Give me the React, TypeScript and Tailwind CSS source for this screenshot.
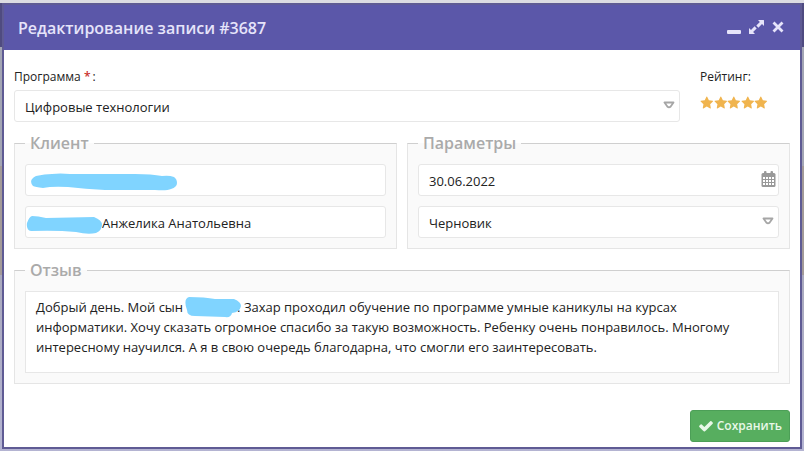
import { useState } from "react";
import type { ReactNode } from "react";

const FIELD =
  "block h-8 w-full rounded-[3px] border border-[#e7e7e7] bg-white px-[10px] text-[13px] text-[#222] outline-none";

const REVIEW =
  "Добрый день. Мой сын" +
  "\u00a0".repeat(16) +
  ". Захар проходил обучение по программе умные каникулы на курсах информатики. Хочу сказать огромное спасибо за такую возможность. Ребенку очень понравилось. Многому интересному научился. А я в свою очередь благодарна, что смогли его заинтересовать.";

function Star() {
  return (
    <svg viewBox="0 0 1792 1792" className="h-[14px] w-[14px]" fill="#f0b44e" aria-hidden="true">
      <path d="M1728 647q0 22-26 48l-363 354 86 500q1 7 1 20 0 21-10.5 35.5t-30.5 14.5q-19 0-40-12l-449-236-449 236q-22 12-40 12-21 0-31.5-14.5t-10.5-35.5q0-6 2-20l86-500-364-354q-25-27-25-48 0-37 56-46l502-73 225-455q19-41 49-41t49 41l225 455 502 73q56 9 56 46z" />
    </svg>
  );
}

function SelectArrow() {
  return (
    <svg viewBox="0 0 12 8" className="pointer-events-none absolute top-[11px] right-[5px] h-2 w-3" aria-hidden="true">
      <path d="M1.5 1.5H10.5L7.5 5.8Q6 7 4.5 5.8Z" fill="#fff" stroke="#a6a6a6" strokeWidth="1.8" strokeLinejoin="round" />
    </svg>
  );
}

function CalendarIcon() {
  return (
    <svg viewBox="0 0 15 16" className="h-4 w-[15px]" aria-hidden="true">
      <rect x="0.500" y="2" width="14" height="14" rx="1.500" fill="#999" />
      <rect x="3" y="0" width="2.500" height="4" rx="1" fill="#999" />
      <rect x="9.500" y="0" width="2.500" height="4" rx="1" fill="#999" />
      <path
        fill="#fff"
        d="M2 6h2v2H2zM5 6h2v2H5zM8 6h2v2H8zM11 6h2v2H11zM2 9h2v2H2zM5 9h2v2H5zM8 9h2v2H8zM11 9h2v2H11zM2 12h2v2H2zM5 12h2v2H5zM8 12h2v2H8zM11 12h2v2H11z"
      />
    </svg>
  );
}

function Group({ title, children }: { title: string; children: ReactNode }) {
  return (
    <fieldset className="min-w-0 border border-[#e5e5e5] border-t-[#cfcfcf] bg-[#fafafa] px-[10px] pb-[10px]">
      <legend className="px-[5px] text-base leading-5 font-semibold text-[#aaa]">{title}</legend>
      <div className="flex flex-col gap-[10px] pt-[11px]">{children}</div>
    </fieldset>
  );
}

export default function App() {
  const [name, setName] = useState("Анжелика Анатольевна");
  const [login, setLogin] = useState("");
  const [date, setDate] = useState("30.06.2022");
  const [review, setReview] = useState(REVIEW);

  return (
    <div className="min-h-screen bg-[linear-gradient(to_bottom,#dcdce2_3px,#4f4b80_3px,#4f4b80_47px,#a3a5b4_47px,#a3a5b4_166px,#a39a98_166px,#a39a98_275px,#a9a9bd_275px,#b4b4d2)] px-[2px] pt-[3px] pb-[2px] font-['Open_Sans','Noto_Sans',sans-serif] text-[#222]">
      <div role="dialog" aria-labelledby="dialog-title" className="flex min-h-[calc(100vh-5px)] flex-col border-2 border-[#5f5b94] bg-white">
        <header className="flex h-[45px] items-center justify-between bg-[#5b57a9] pr-4 pl-[14px] text-[#e6e4fa]">
          <h1 id="dialog-title" className="text-base font-semibold">Редактирование записи #3687</h1>
          <div className="flex items-center gap-2">
            <button type="button" aria-label="Свернуть" className="block">
              <svg viewBox="0 0 14 16" className="h-4 w-[14px]" fill="currentColor">
                <rect y="10" width="14" height="4" rx="1" />
              </svg>
            </button>
            <button type="button" aria-label="Развернуть" className="block">
              <svg viewBox="0 0 15 16" className="h-4 w-[15px]" fill="currentColor">
                <path d="M9 0H14.500Q15 0 15 .500V6L13 4.100L9.400 7.700L7.300 5.600L10.900 2zM6 14H.500Q0 14 0 13.500V8L2 9.900L5.600 6.300L7.700 8.400L4.100 12z" />
              </svg>
            </button>
            <button type="button" aria-label="Закрыть" className="block">
              <svg viewBox="0 0 12 16" className="h-4 w-3" stroke="currentColor" strokeWidth="2.8">
                <path d="M1.500 2.500l9 9M10.500 2.500l-9 9" />
              </svg>
            </button>
          </div>
        </header>

        <form className="flex grow flex-col px-[10px] pb-[5px]" onSubmit={(e) => e.preventDefault()}>
          <div className="flex gap-5 pt-[17px]">
            <div className="grow">
              <label htmlFor="program" className="block h-[23px] text-xs leading-5">
                Программа <span className="pr-[2px] font-semibold text-[#c9302c]">*</span>:
              </label>
              <div className="relative">
                <select id="program" className={FIELD + " appearance-none pt-[3px]"}>
                  <option>Цифровые технологии</option>
                </select>
                <SelectArrow />
              </div>
            </div>
            <div className="w-[90px]">
              <div className="h-[23px] text-xs leading-5">Рейтинг:</div>
              <div role="img" aria-label="5 из 5" className="flex w-[68px] pt-[6px]">
                <Star />
                <Star />
                <Star />
                <Star />
                <Star />
              </div>
            </div>
          </div>

          <div className="mt-[11px] grid grid-cols-2 gap-[10px]">
            <Group title="Клиент">
              <div className="relative">
                <input aria-label="Логин" className={FIELD + " pt-[1px]"} value={login} onChange={(e) => setLogin(e.target.value)} />
                <svg viewBox="0 0 148 18" className="absolute top-[9px] left-[5px] h-[18px] w-[148px]" fill="#80d4ff" aria-hidden="true">
                  <path d="M6 3Q15 1 22 1Q30 0 40 1L105 1Q122 1 132 3Q139 2 144 4Q147 6 147 10Q147 14 141 16Q137 18 125 17L75 17Q55 16 38 14Q22 13 13 15Q5 14 3 13Q-2 7 6 3Z" />
                </svg>
              </div>
              <div className="relative">
                <input aria-label="Имя клиента" className={FIELD + " pt-[1px] pl-[76px]"} value={name} onChange={(e) => setName(e.target.value)} />
                <svg viewBox="0 0 76 18" className="absolute top-[10px] left-[1px] h-[18px] w-[76px]" fill="#80d4ff" aria-hidden="true">
                  <path d="M6 0Q12 0 20 2L68 1Q76 4 76 9Q76 14 70 17Q62 19 50 16Q30 14 5 15Q0 14 1 7Q3 1 6 0Z" />
                </svg>
              </div>
            </Group>
            <Group title="Параметры">
              <div className="relative">
                <input aria-label="Дата" className={FIELD + " pt-[1px]"} value={date} onChange={(e) => setDate(e.target.value)} />
                <button type="button" aria-label="Выбрать дату" className="absolute top-[7px] right-[3px] block">
                  <CalendarIcon />
                </button>
              </div>
              <div className="relative">
                <select aria-label="Статус" className={FIELD + " appearance-none pt-[3px]"}>
                  <option>Черновик</option>
                </select>
                <SelectArrow />
              </div>
            </Group>
          </div>

          <div className="mt-[11px]">
            <Group title="Отзыв">
              <div className="relative">
                <textarea
                  aria-label="Отзыв"
                  className="block h-[82px] w-full resize-none overflow-hidden border border-[#e7e7e7] bg-white px-[10px] py-[5px] text-[13px] leading-5 outline-none"
                  value={review}
                  onChange={(e) => setReview(e.target.value)}
                />
                <svg viewBox="0 0 56 21" className="absolute top-[6px] left-[160px] h-[21px] w-14" fill="#80d4ff" aria-hidden="true">
                  <path d="M4 0Q20 0 30 2L49 2Q56 5 56 9Q55 15 47 16Q46 21 40 20L10 19Q2 19 2 13Q-2 2 4 0Z" />
                </svg>
              </div>
            </Group>
          </div>

          <div className="mt-auto flex justify-end">
            <button type="submit" className="flex h-8 items-center gap-[3px] rounded-[3px] border border-[#4c9f57] bg-[#57ae5f] px-[7px] text-xs font-semibold text-[#e8f8e8]">
              <svg viewBox="0 0 1792 1792" className="h-4 w-4" fill="currentColor" aria-hidden="true">
                <path d="M1671 566q0 40-28 68l-724 724-136 136q-28 28-68 28t-68-28l-136-136-362-362q-28-28-28-68t28-68l136-136q28-28 68-28t68 28l294 295 656-657q28-28 68-28t68 28l136 136q28 28 28 68z" />
              </svg>
              Сохранить
            </button>
          </div>
        </form>
      </div>
    </div>
  );
}
